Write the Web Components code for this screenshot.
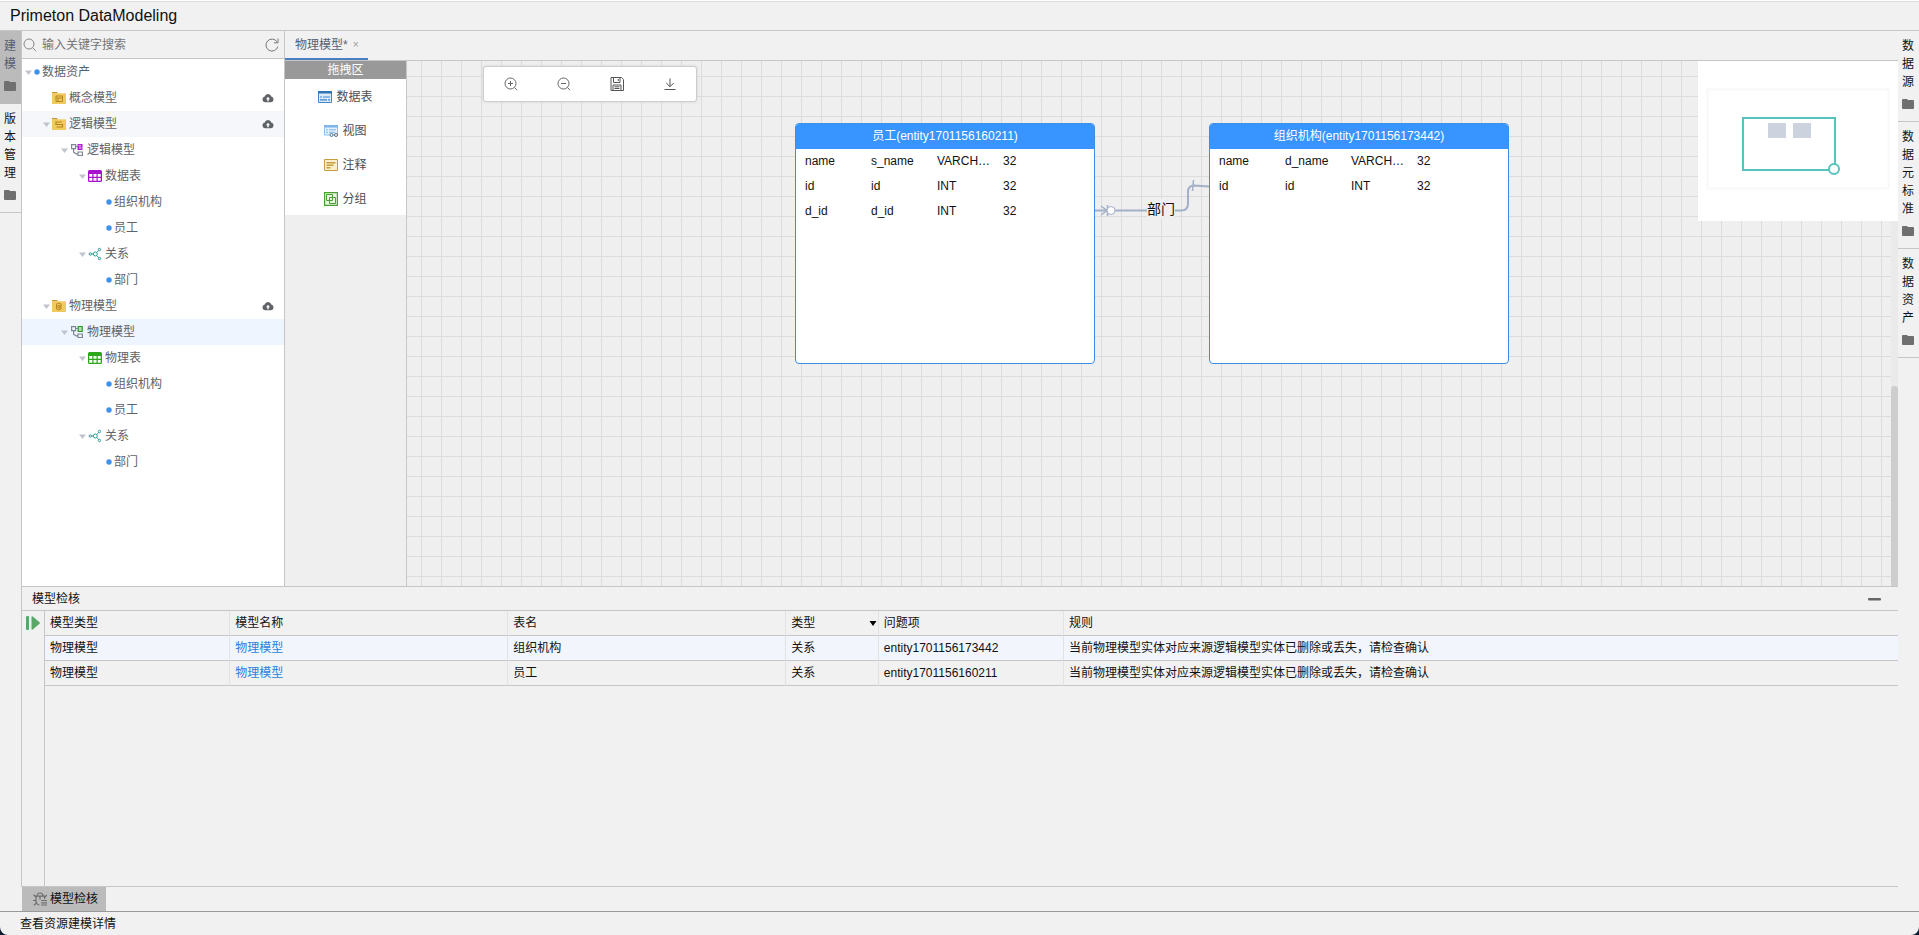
<!DOCTYPE html>
<html lang="zh-CN">
<head>
<meta charset="utf-8">
<title>Primeton DataModeling</title>
<style>
  html, body { height: 100%; margin: 0; }
  body {
    background: #0b1c33;
    font: 12px/18px "Liberation Sans", "Noto Sans CJK SC", sans-serif;
    color: #111;
    --line: #c6c6c6;
    --panel: #f1f1f1;
  }
</style>
</head>
<body>
<dm-app></dm-app>

<script>
const ICONS = {
  search: `<svg viewBox="0 0 14 14" fill="none" stroke="#888"><circle cx="6" cy="6" r="5"/><path d="M9.5 9.5l3.5 3.7"/></svg>`,
  refresh: `<svg viewBox="0 0 14 14" fill="none" stroke="#777"><path d="M12.8 8.5A6 6 0 1 1 12 3.8M13 .5v4.300H9"/></svg>`,
  folder: `<svg viewBox="0 0 12 12"><path fill="#6f6f6f" d="M0 2a1 1 0 0 1 1-1h4l1 1h5a1 1 0 0 1 1 1v7a1 1 0 0 1-1 1H1a1 1 0 0 1-1-1z"/></svg>`,
  caret: `<svg viewBox="0 0 7 7"><path fill="#c0c4cc" d="M0 1.500h7L3.500 6z"/></svg>`,
  dot: `<svg viewBox="0 0 6 6"><circle cx="3" cy="3" r="2.700" fill="#3f92ea"/></svg>`,
  concept: `<svg viewBox="0 0 14 14"><path fill="#c9962f" d="M0 1h5l1 1.600H0z"/><path fill="#f0ca5e" d="M0 2.300h14V13H0z"/><path fill="none" stroke="#b98520" d="M4 5h6.500v5.500H4zM4 7h6.500M6 7v3.500"/></svg>`,
  logic: `<svg viewBox="0 0 14 14"><path fill="#c9962f" d="M0 1h5l1 1.600H0z"/><path fill="#f0ca5e" d="M0 2.300h14V13H0z"/><path fill="none" stroke="#b98520" stroke-width="1.200" d="M10 5H4v2.500h6.500V10H4.500"/></svg>`,
  physical: `<svg viewBox="0 0 14 14"><path fill="#c9962f" d="M0 1h5l1 1.600H0z"/><path fill="#f0ca5e" d="M0 2.300h14V13H0z"/><g fill="none" stroke="#b98520"><path d="M4.500 5l2-1 2.500 1v5l-2.500 1-2-1zM6 6.500h2v2.500H6z"/></g></svg>`,
  logicModel: `<svg viewBox="0 0 14 14" fill="none"><path stroke="#7c8794" stroke-width="1.200" d="M1.600 1.600h4v4h-4zM8 9h4.400v3.500H8zM3.600 6v3.200L6 10.800h2M5.800 3.500h2"/><path fill="#b21bd6" d="M7.500 1h5v6h-5z"/><path stroke="#fff" stroke-width=".8" d="M8.500 2.800h2.500M9 5h2.700"/></svg>`,
  physicalModel: `<svg viewBox="0 0 14 14" fill="none"><path stroke="#7c8794" stroke-width="1.200" d="M1.600 1.600h4v4h-4zM8 9h4.400v3.500H8zM3.600 6v3.200L6 10.800h2M5.800 3.500h2"/><path fill="#b4e0af" stroke="#259a26" stroke-width="1.200" d="M8.200 1.500h4v5h-4z"/></svg>`,
  tablePurple: `<svg viewBox="0 0 14 14"><rect y="1" width="14" height="12" rx="1.500" fill="#a90fd0"/><path fill="#fff" d="M1.300 5h3v2.800h-3zM5.500 5h3v2.800h-3zM9.700 5h3v2.800h-3zM1.300 9h3v2.800h-3zM5.500 9h3v2.800h-3zM9.700 9h3v2.800h-3z"/></svg>`,
  tableGreen: `<svg viewBox="0 0 14 14"><rect y="1" width="14" height="12" rx="1.500" fill="#2aa817"/><path fill="#fff" d="M1.300 5h3v2.800h-3zM5.500 5h3v2.800h-3zM9.700 5h3v2.800h-3zM1.300 9h3v2.800h-3zM5.500 9h3v2.800h-3zM9.700 9h3v2.800h-3z"/></svg>`,
  relation: `<svg viewBox="0 0 14 14" fill="none" stroke="#2f9e96"><circle cx="2.300" cy="7" r="1.200"/><circle cx="7.300" cy="7" r="2"/><circle cx="11.500" cy="2.500" r="1.200"/><circle cx="11.500" cy="11.500" r="1.200"/><path d="M3.500 7h1.800M8.700 5.500l2-2.200M8.700 8.500l2 2.200"/></svg>`,
  cloud: `<svg viewBox="0 0 12 12"><path fill="#5f6266" d="M3 10.200a2.900 2.900 0 0 1-.3-5.700 3.400 3.400 0 0 1 6.600 0A2.900 2.900 0 0 1 9 10.200z"/><path fill="#fff" d="M6 4.800l2 2.500H6.700v2H5.300v-2H4z"/></svg>`,
  pTable: `<svg viewBox="0 0 14 14"><path fill="#dcebfa" stroke="#3f86c8" d="M.500 1.500h13v11H.500z"/><path fill="#2f74b5" d="M0 1h14v2.500H0z"/><path stroke="#3f86c8" stroke-width="1.200" d="M2 7h2M5 7h7M2 9.800h7M10 9.800h2"/></svg>`,
  pView: `<svg viewBox="0 0 14 14"><path fill="#e4f0fb" stroke="#8fc0ec" d="M.500 1.500h13v9.500H.500z"/><path fill="#7db5e8" d="M0 1h14v2.500H0z"/><path stroke="#7db5e8" d="M2 5.800h2M5 5.800h7M2 8.300h2M5 8.300h6"/><g fill="#fff" stroke="#50708f"><circle cx="7.500" cy="11" r="1.500"/><circle cx="12" cy="11" r="1.500"/></g></svg>`,
  pNote: `<svg viewBox="0 0 14 14"><path fill="#fbeecb" stroke="#c59d3c" d="M.500 1.500h13v11H.500z"/><path stroke="#c59d3c" stroke-width="1.400" d="M2.500 4.800h9M2.500 7.200h7M2.500 9.700h4"/></svg>`,
  pGroup: `<svg viewBox="0 0 14 14" fill="none" stroke="#4f9e38"><path fill="#e6f5df" stroke-width="1.200" d="M.600.600h12.800v12.800H.600z"/><path d="M2.500 2.500h6v6h-6zM5.500 5.500h6v6h-6z"/></svg>`,
  zoomIn: `<svg viewBox="0 0 14 14" fill="none" stroke="#666"><circle cx="6.500" cy="6.500" r="5.500"/><path d="M10.500 10.500l2.500 2.700M4 6.500h5M6.500 4v5"/></svg>`,
  zoomOut: `<svg viewBox="0 0 14 14" fill="none" stroke="#666"><circle cx="6.500" cy="6.500" r="5.500"/><path d="M10.500 10.500l2.500 2.700M4 6.500h5"/></svg>`,
  save: `<svg viewBox="0 0 14 14" fill="none" stroke="#555"><path d="M1 .5h10.500L13.500 2.500V13.500H1zM3.500.500v5h6.500V.500M8.300 2v2M3 13.500V8h8v5.500M4.500 9.800h5M4.500 11.500h5"/></svg>`,
  download: `<svg viewBox="0 0 14 14" fill="none" stroke="#555"><path d="M7 1.500v8M3.300 6L7 9.700 10.700 6M1.500 12.500h11"/></svg>`,
  run: `<svg viewBox="0 0 14 14" fill="#5aa867"><rect y="0" width="3" height="14" rx="1"/><path d="M5.500 1.200Q5.500-.400 6.800.500L13.500 6.200Q14.300 7 13.500 7.800L6.800 13.500Q5.500 14.400 5.500 12.800z"/></svg>`,
  minus: `<svg viewBox="0 0 14 14"><rect x="0" y="6" width="13" height="2.500" rx="1" fill="#666"/></svg>`,
  sort: `<svg viewBox="0 0 8 8"><path d="M.500 2h7L4 7z"/></svg>`,
  bug: `<svg viewBox="0 0 14 14" fill="none" stroke="#6d6d6d" stroke-width="1.200"><path d="M4 4a3 3 0 0 1 6 0M2.500 4.200h9.500M3 4.500v5a4 4 0 0 0 3.500 3.500M11.500 4.500V7M3 5L.500 2.800M3 8.500H0M3.500 11L1 13.200M12 5l1.800-2M7 4.500v3M8.200 8.500H14M8.200 10.800H14M8.200 13H14"/></svg>`
};

function define(name, html, setup) {
  const tpl = document.createElement('template');
  tpl.innerHTML = html;
  customElements.define(name, class extends HTMLElement {
    connectedCallback() {
      if (this.shadowRoot) return;
      this.attachShadow({ mode: 'open' }).append(tpl.content.cloneNode(true));
      if (setup) setup(this, this.shadowRoot);
    }
  });
}

define('dm-icon', `<style>
  :host { display: inline-block; flex: none; width: var(--size, 14px); height: var(--size, 14px); }
  svg { display: block; width: 100%; height: 100%; }
</style>`, (host, root) => {
  root.innerHTML += ICONS[host.getAttribute('name')];
});

/* Vertical tab of a side rail: one character per line, then a folder */
define('dm-rail-tab', `<style>
  :host { display: block; border-bottom: 1px solid var(--line); }
  :host([active]) { background: #bbb; color: #555f75; border-color: #bbb; }
  button { all: unset; box-sizing: border-box; display: flex; flex-direction: column; gap: 7px; padding: 6px 5px 11px 4px; cursor: pointer; }
  span { width: 12px; word-break: break-all; }
  dm-icon { --size: 12px; }
</style><button><span><slot></slot></span><dm-icon name="folder"></dm-icon></button>`);

define('dm-rail', `<style>
  :host { display: block; width: 21px; background: var(--panel); }
</style><slot></slot>`);

define('dm-search', `<style>
  :host { display: flex; align-items: center; height: 27px; padding: 0 5px 0 1px; gap: 5px; background: var(--panel); border-bottom: 1px solid var(--line); }
  input { flex: 1; min-width: 0; border: 0; padding: 0; background: none; font: inherit; outline: 0; }
  input::placeholder { color: #757575; }
  button { all: unset; display: flex; cursor: pointer; }
</style>
<dm-icon name="search"></dm-icon>
<input type="text" aria-label="搜索" placeholder="输入关键字搜索">
<button aria-label="刷新"><dm-icon name="refresh"></dm-icon></button>`);

define('dm-tree-item', `<style>
  :host { display: flex; align-items: center; height: 26px; padding-right: 10px; color: #606266; }
  :host([hovered]) { background: #f5f7fa; }
  :host([current]) { background: #eef5fe; }
  .caret { display: flex; width: 9px; padding-left: 3px; }
  .caret dm-icon { --size: 7px; }
  .kind { margin-right: 3px; }
  .kind[name=dot] { --size: 6px; margin-right: 2px; }
  .label { flex: 1; }
  .cloud { --size: 12px; }
</style><span class="caret"></span><span class="label"><slot></slot></span>`, (host, root) => {
  host.style.paddingLeft = host.getAttribute('level') * 18 + 'px';
  const caret = root.querySelector('.caret');
  if (!host.hasAttribute('leaf')) caret.innerHTML = '<dm-icon name="caret"></dm-icon>';
  const icon = host.getAttribute('icon') || 'dot';
  caret.insertAdjacentHTML('afterend', `<dm-icon class="kind" name="${icon}"></dm-icon>`);
  if (host.hasAttribute('cloud')) root.querySelector('.label').insertAdjacentHTML('afterend', '<dm-icon class="cloud" name="cloud"></dm-icon>');
});

define('dm-explorer', `<style>
  :host { display: flex; flex-direction: column; width: 262px; background: #fff; border: solid var(--line); border-width: 0 1px; }
</style>
<dm-search></dm-search>
<dm-tree-item level="0">数据资产</dm-tree-item>
<dm-tree-item level="1" icon="concept" leaf cloud>概念模型</dm-tree-item>
<dm-tree-item level="1" icon="logic" cloud hovered>逻辑模型</dm-tree-item>
<dm-tree-item level="2" icon="logicModel">逻辑模型</dm-tree-item>
<dm-tree-item level="3" icon="tablePurple">数据表</dm-tree-item>
<dm-tree-item level="4" leaf>组织机构</dm-tree-item>
<dm-tree-item level="4" leaf>员工</dm-tree-item>
<dm-tree-item level="3" icon="relation">关系</dm-tree-item>
<dm-tree-item level="4" leaf>部门</dm-tree-item>
<dm-tree-item level="1" icon="physical" cloud>物理模型</dm-tree-item>
<dm-tree-item level="2" icon="physicalModel" current>物理模型</dm-tree-item>
<dm-tree-item level="3" icon="tableGreen">物理表</dm-tree-item>
<dm-tree-item level="4" leaf>组织机构</dm-tree-item>
<dm-tree-item level="4" leaf>员工</dm-tree-item>
<dm-tree-item level="3" icon="relation">关系</dm-tree-item>
<dm-tree-item level="4" leaf>部门</dm-tree-item>`);

define('dm-palette-item', `<style>
  :host { display: flex; align-items: center; justify-content: center; gap: 4px; box-sizing: border-box; height: 34px; padding-top: 2px; background: #fff; color: #4c4f55; }
</style><span><slot></slot></span>`, (host, root) => {
  root.querySelector('span').insertAdjacentHTML('beforebegin', `<dm-icon name="${host.getAttribute('icon')}"></dm-icon>`);
});

define('dm-palette', `<style>
  :host { display: block; width: 121px; background: #efefef; border-right: 1px solid var(--line); }
  header { background: #999; color: #fff; text-align: center; line-height: 18px; }
</style>
<header>拖拽区</header>
<dm-palette-item icon="pTable">数据表</dm-palette-item>
<dm-palette-item icon="pView">视图</dm-palette-item>
<dm-palette-item icon="pNote">注释</dm-palette-item>
<dm-palette-item icon="pGroup">分组</dm-palette-item>`);

define('dm-toolbar', `<style>
  :host { display: flex; background: #fff; border: 1px solid #ccc; border-radius: 3px; box-shadow: 0 0 3px #d4d4d4; }
  button { all: unset; display: flex; justify-content: center; width: 53px; padding: 10px 0; cursor: pointer; }
</style>
<button aria-label="放大"><dm-icon name="zoomIn"></dm-icon></button>
<button aria-label="缩小"><dm-icon name="zoomOut"></dm-icon></button>
<button aria-label="保存"><dm-icon name="save"></dm-icon></button>
<button aria-label="下载"><dm-icon name="download"></dm-icon></button>`);

define('dm-entity', `<style>
  :host { display: block; box-sizing: border-box; width: 300px; height: 241px; background: #fff; border: 1px solid #3a8ee6; border-radius: 4px; overflow: hidden; }
  header { background: #3894ff; color: #fff; text-align: center; line-height: 25px; }
  table { border-collapse: collapse; margin-left: 9px; }
  td { width: 66px; height: 25px; padding: 0 0 2px; white-space: nowrap; box-sizing: border-box; }
</style>
<header><slot></slot></header><table><tbody></tbody></table>`, (host, root) => {
  root.querySelector('tbody').innerHTML = host.getAttribute('rows').split(';')
    .map(r => `<tr>${r.split(',').map(c => `<td>${c}</td>`).join('')}</tr>`).join('');
});

define('dm-minimap', `<style>
  :host { display: block; width: 200px; height: 160px; background: #fff; }
  svg { display: block; }
</style>
<svg width="200" height="160" viewBox="0 0 200 160">
  <rect x="9.500" y="28.500" width="181" height="99" fill="none" stroke="#f8f8f8" stroke-width="2"/>
  <path fill="#cdd3de" d="M70 62h18v15H70zM95 62h18v15H95z"/>
  <g fill="none" stroke="#56c3bd" stroke-width="2"><rect x="45" y="57" width="92" height="52"/><circle cx="136" cy="108" r="5" fill="#fff"/></g>
</svg>`);

/* Free canvas: nodes, their link and the floating tools sit on a 20px grid */
define('dm-canvas', `<style>
  :host { display: block; position: relative; flex: 1; min-width: 0; overflow: hidden; background: #efefef;
    background-image: linear-gradient(90deg, #dcdcdc 1px, transparent 1px), linear-gradient(#dcdcdc 1px, transparent 1px);
    background-size: 20px 20px; background-position: 14px 15px; }
  dm-toolbar { position: absolute; left: 76px; top: 5px; }
  dm-minimap { position: absolute; right: 0; top: 0; }
  .staff { position: absolute; left: 388px; top: 62px; }
  .org { position: absolute; left: 802px; top: 62px; }
  .link { position: absolute; left: 688px; top: 109px; }
  .name { position: absolute; left: 740px; top: 138px; font-size: 14px; line-height: 20px; background: #efefef; }
  .track { position: absolute; right: 0; top: 0; bottom: 0; width: 7px; background: #eaeaea; }
  .thumb { position: absolute; right: 0; top: 325px; bottom: 0; width: 7px; background: #cecece; border-radius: 3px 3px 0 0; }
</style>
<svg class="link" width="114" height="50" viewBox="0 0 114 50" fill="none" stroke="#a3b1c8" stroke-width="2">
  <path d="M0 40.500H86Q93 40.500 93 33.500V22Q93 15.500 99 15.500L114 16.500"/>
  <path stroke-width="1.500" d="M6 36l6 4.500L6 45M12.500 35v11"/><path stroke-width="1.500" d="M98.500 10l-1 11"/>
  <circle cx="16" cy="40.500" r="4" fill="#fff" stroke-width="1"/>
</svg>
<span class="name">部门</span>
<dm-entity class="staff" rows="name,s_name,VARCH…,32;id,id,INT,32;d_id,d_id,INT,32">员工(entity1701156160211)</dm-entity>
<dm-entity class="org" rows="name,d_name,VARCH…,32;id,id,INT,32">组织机构(entity1701156173442)</dm-entity>
<dm-toolbar></dm-toolbar>
<div class="track"></div><div class="thumb"></div>
<dm-minimap></dm-minimap>`);

define('dm-editor', `<style>
  :host { display: flex; flex-direction: column; flex: 1; min-width: 0; }
  nav { display: flex; height: 29px; background: var(--panel); border-bottom: 1px solid var(--line); }
  .tab { display: flex; align-items: center; gap: 5px; padding: 0 9px 0 10px; border-bottom: 2px solid #4a7fc1; color: #555f75; }
  button { all: unset; color: #999; cursor: pointer; font-size: 10px; }
  main { display: flex; flex: 1; min-height: 0; }
</style>
<nav><div class="tab"><span>物理模型*</span><button aria-label="关闭">×</button></div></nav>
<main><dm-palette></dm-palette><dm-canvas></dm-canvas></main>`);

define('dm-check-panel', `<style>
  :host { display: flex; flex-direction: column; box-sizing: border-box; height: 301px; border: solid var(--line); border-width: 1px 0 1px 1px; background: var(--panel); }
  header { display: flex; align-items: center; justify-content: space-between; height: 23px; padding: 0 16px 0 10px; border-bottom: 1px solid var(--line); }
  button { all: unset; display: flex; cursor: pointer; }
  .body { display: flex; flex: 1; }
  .side { display: flex; justify-content: center; align-items: flex-start; width: 22px; padding-top: 5px; border-right: 1px solid var(--line); }
  .grid { flex: 1; }
  table { width: 100%; table-layout: fixed; border-collapse: separate; border-spacing: 0; }
  th, td { box-sizing: border-box; height: 25px; padding: 0 5px; text-align: left; font-weight: normal; border-bottom: 1px solid var(--line); border-right: 1px solid #e2e2e2; }
  th { padding-right: 1px; }
  th:last-child, td:last-child { border-right: 0; }
  .hovered { background: #f2f5fb; }
  a { color: #2a82de; text-decoration: none; }
  .sortable { display: flex; justify-content: space-between; align-items: center; }
  .sortable dm-icon { --size: 8px; }
</style>
<header><span>模型检核</span><button aria-label="收起"><dm-icon name="minus"></dm-icon></button></header>
<div class="body">
  <div class="side"><button aria-label="运行检核"><dm-icon name="run"></dm-icon></button></div>
  <div class="grid"><table>
    <colgroup><col style="width:10%"><col style="width:15%"><col style="width:15%"><col style="width:5%"><col style="width:10%"><col style="width:45%"></colgroup>
    <thead><tr><th>模型类型</th><th>模型名称</th><th>表名</th><th><div class="sortable">类型<dm-icon name="sort"></dm-icon></div></th><th>问题项</th><th>规则</th></tr></thead>
    <tbody>
      <tr class="hovered"><td>物理模型</td><td><a href="#model">物理模型</a></td><td>组织机构</td><td>关系</td><td>entity1701156173442</td><td>当前物理模型实体对应来源逻辑模型实体已删除或丢失，请检查确认</td></tr>
      <tr><td>物理模型</td><td><a href="#model">物理模型</a></td><td>员工</td><td>关系</td><td>entity1701156160211</td><td>当前物理模型实体对应来源逻辑模型实体已删除或丢失，请检查确认</td></tr>
    </tbody>
  </table></div>
</div>`);

define('dm-app', `<style>
  :host { display: flex; flex-direction: column; box-sizing: border-box; height: 100vh; background: var(--panel); border-radius: 0 0 8px 8px; overflow: hidden; }
  h1 { margin: 0; padding: 1px 10px 0; border-top: 1px solid #fff; border-bottom: 1px solid var(--line); box-shadow: inset 0 1px #dcdcdc; font-size: 16px; font-weight: normal; line-height: 28px; }
  .work { display: flex; flex: 1; min-height: 0; }
  .center { display: flex; flex-direction: column; flex: 1; min-width: 0; }
  .top { display: flex; flex: 1; min-height: 0; }
  .dock { display: flex; height: 24px; padding-left: 1px; }
  .dock button { all: unset; display: flex; align-items: center; gap: 3px; padding: 0 8px 0 11px; background: #bbb; cursor: pointer; }
  footer { border-top: 1px solid #999; padding: 1px 20px 0; line-height: 22px; }
</style>
<h1>Primeton DataModeling</h1>
<div class="work">
  <dm-rail><dm-rail-tab active>建模</dm-rail-tab><dm-rail-tab>版本管理</dm-rail-tab></dm-rail>
  <div class="center">
    <div class="top"><dm-explorer></dm-explorer><dm-editor></dm-editor></div>
    <dm-check-panel></dm-check-panel>
    <div class="dock"><button><dm-icon name="bug"></dm-icon>模型检核</button></div>
  </div>
  <dm-rail><dm-rail-tab>数据源</dm-rail-tab><dm-rail-tab>数据元标准</dm-rail-tab><dm-rail-tab>数据资产</dm-rail-tab></dm-rail>
</div>
<footer>查看资源建模详情</footer>`);
</script>
</body>
</html>
